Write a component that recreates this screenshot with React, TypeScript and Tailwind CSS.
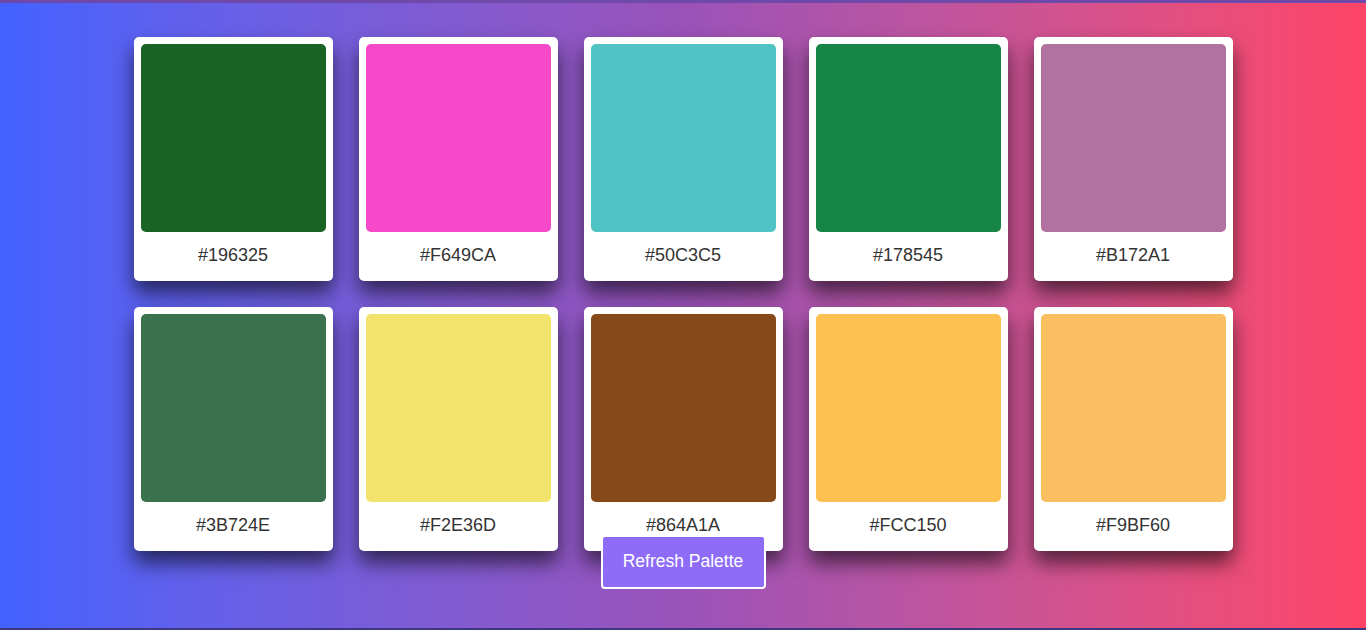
import React, {useState} from 'react';

const initial = [
    '#196325', '#F649CA', '#50C3C5', '#178545', '#B172A1',
    '#3B724E', '#F2E36D', '#864A1A', '#FCC150', '#F9BF60',
];

const randomHex = () =>
    '#' + Math.floor(Math.random() * 0xffffff).toString(16).padStart(6, '0').toUpperCase();

const ColorCard = ({color}: { color: string }) => (
    <div className="flex flex-col w-[199px] h-[244px] p-[7px] rounded-[5px] bg-white shadow-[0px_12px_20px_0px_rgba(0,0,0,0.6)]">
        <div className="w-[185px] h-[188px] rounded-[5px]" style={{backgroundColor: color}}/>
        <div className="flex-1 flex items-center justify-center text-[18px] text-[#333] pt-[5px]">
            {color}
        </div>
    </div>
);

export default function App() {
    const [colors, setColors] = useState(initial);

    return (
        <div
            className="h-[630px] flex flex-col items-center pt-[34px] border-t-[3px] border-b-2 border-t-[#6e49a9] border-b-[#3b3780] bg-linear-to-r from-[#4262ff] via-[#9a52b9] to-[#ff4466]"
            style={{fontFamily: '"Liberation Sans", Arial, sans-serif'}}>
            {/*palette*/}
            <div className="grid grid-cols-5 gap-[26px]">
                {colors.map((c, i) => <ColorCard key={i} color={c}/>)}
            </div>

            <button
                onClick={() => setColors(colors.map(() => randomHex()))}
                className="relative z-10 -mt-[16px] w-[165px] h-[54px] rounded-[4px] border-2 border-white bg-[#8e6cf7] text-white text-[17.5px] pb-[2px]">
                Refresh Palette
            </button>
        </div>
    );
}
